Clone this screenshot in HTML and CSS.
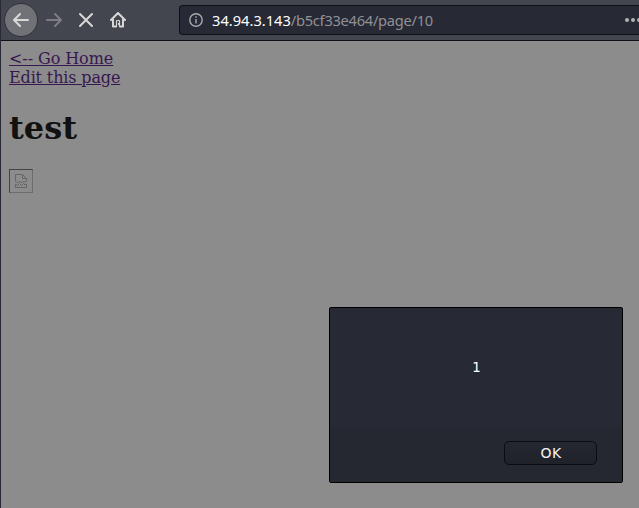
FILE: index.html
```
<!DOCTYPE html>
<html lang="en">
<head>
<meta charset="utf-8">
<title>test</title>
<link rel="stylesheet" href="styles.css">
</head>
<body>
<div class="window">
  <header class="toolbar">
    <nav class="controls">
      <button class="tool back" aria-label="Back"><svg width="16" height="16" viewBox="0 0 16 16"><path d="M15 8H1.500M7 2L1 8l6 6"/></svg></button>
      <button class="tool forward" aria-label="Forward"><svg width="16" height="16" viewBox="0 0 16 16"><path d="M1 8h13.500M9 2l6 6-6 6"/></svg></button>
      <button class="tool" aria-label="Stop"><svg width="16" height="16" viewBox="0 0 16 16"><path d="M2 2l12 12M14 2L2 14"/></svg></button>
      <button class="tool" aria-label="Home"><svg width="16" height="16" viewBox="0 0 16 16"><path d="M1 8l7-7 7 7M3 7v7.500h3M13 7v7.500h-3"/><path class="door" d="M6.500 14.500V9.200Q6.500 8.500 7.200 8.500h1.600q.7 0 .7.700V14.500"/><path class="solid" d="M8 11h1v2H8z"/></svg></button>
    </nav>
    <div class="address">
      <svg class="info" width="14" height="14" viewBox="0 0 14 14"><circle cx="7" cy="7" r="6.200"/><path d="M7 6v4.500M7 3.300v1.500"/></svg>
      <span class="url"><span class="host">34.94.3.143</span><span class="path">/b5cf33e464/page/10</span></span>
      <svg class="more" width="16" height="4" viewBox="0 0 16 4"><circle cx="2" cy="2" r="2"/><circle cx="8" cy="2" r="2"/><circle cx="14" cy="2" r="2"/></svg>
    </div>
  </header>
  <main class="page">
    <a class="link" href="#">&lt;-- Go Home</a>
    <a class="link edit" href="#">Edit this page</a>
    <h1>test</h1>
    <div class="broken"><svg width="12" height="14" viewBox="0 0 12 14"><path d="M.5 7V.5h7l4 4V7M7.500.5v4h4M.5 7l2 2 2-2 2 2 2-2 1.500 1.500L11.500 7M.5 13.500V10l2 1.500 2-2 2 2 2-2 1.500 1.500 1.500-1v3.500z"/></svg></div>
  </main>
  <section class="dialog" role="alertdialog">
    <div class="message">1</div>
    <div class="actions"><button class="ok">OK</button></div>
  </section>
</div>
</body>
</html>
```
FILE: styles.css
```
* { box-sizing: border-box; }
body { margin: 0; overflow: hidden; background: #8c8c8c; }
button { padding: 0; border: 0; background: none; }
.window {
  position: relative;
  height: 508px;
  border-left: 1px solid #272935;
  overflow: hidden;
}
.toolbar {
  display: flex;
  height: 41px;
  padding-left: 3px;
  background: #43464e;
  border-bottom: 1px solid #101118;
}
.controls { display: flex; width: 174px; align-items: center; }
.tool {
  display: flex;
  width: 32px;
  height: 34px;
  align-items: center;
  justify-content: center;
}
.tool svg { fill: none; stroke: #d8d9d7; stroke-width: 2; stroke-linecap: round; stroke-linejoin: round; }
.tool .door { stroke-width: 1.200; }
.tool .solid { fill: #d8d9d7; stroke: none; }
.back {
  width: 34px;
  border: 1px solid #303239;
  border-radius: 50%;
  background: #707277;
}
.forward svg { stroke: #7b7d82; }
.address {
  display: flex;
  flex: 1;
  height: 30px;
  margin-top: 5px;
  margin-left: 1px;
  padding-left: 9px;
  align-items: center;
  border: 1px solid #0e0f14;
  border-right: 0;
  border-radius: 4px 0 0 4px;
  background: #272935;
}
.info { fill: none; stroke: #a9aaad; stroke-width: 1.400; }
.url {
  flex: 1;
  margin-left: 9px;
  color: #909195;
  font: 14.667px/20px "Noto Sans", sans-serif;
  white-space: nowrap;
}
.host { color: #fff; }
.path { letter-spacing: -0.28px; }
.more { flex: none; margin-right: -2px; fill: #b2b3b5; }
.page {
  padding: 8px;
  font: 16px/19px "DejaVu Serif", serif;
  color: #111;
}
.link { display: block; width: max-content; color: #38164f; letter-spacing: -0.08px; }
.edit { letter-spacing: -0.14px; }
h1 { margin: 23px 0 22px; font-size: 32px; line-height: 37px; }
.broken {
  display: flex;
  width: 24px;
  height: 24px;
  align-items: center;
  justify-content: center;
  border: 1px solid;
  border-color: #444 #6c6c6c #6c6c6c #444;
}
.broken svg { fill: none; stroke: #666; stroke-width: 1; }
.dialog {
  position: absolute;
  left: 328px;
  top: 307px;
  width: 294px;
  height: 176px;
  border: 1px solid #000;
  border-radius: 2px;
  background: #272934;
  color: #fff;
  font: 13.333px/16px "DejaVu Sans", sans-serif;
}
.message { height: 119px; padding: 52px 0 0 1px; text-align: center; }
.actions {
  display: flex;
  height: 55px;
  padding: 14px 25px 0 0;
  justify-content: flex-end;
  background: #252830;
}
.ok {
  width: 93px;
  height: 24px;
  padding: 0 0 0 1px;
  border: 1px solid #0b0c10;
  border-radius: 5px;
  background: linear-gradient(#252731, #20222a);
  color: #f4f4f4;
  font: inherit;
  font-size: 14px;
  letter-spacing: 0.5px;
}
```
